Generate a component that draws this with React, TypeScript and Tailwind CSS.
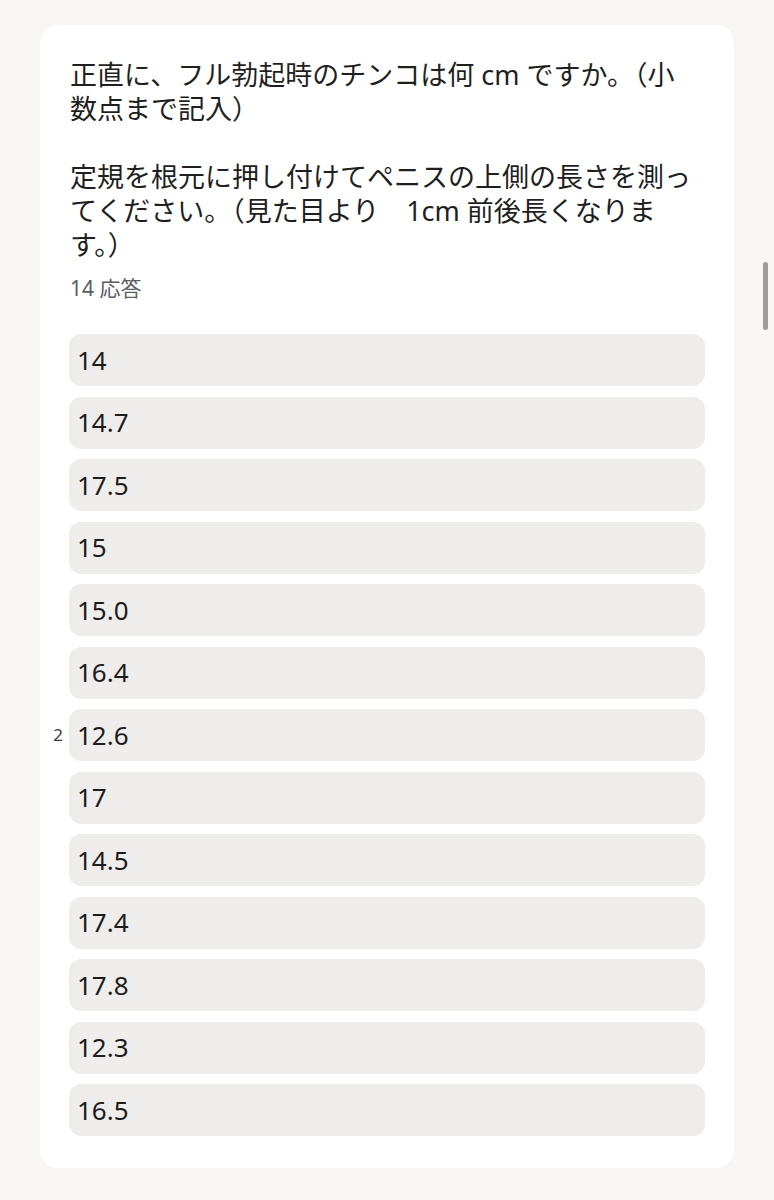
import React from "react";

const question =
  "正直に、フル勃起時のチンコは何 cm ですか。（小\n数点まで記入）\n\n定規を根元に押し付けてペニスの上側の長さを測っ\nてください。（見た目より　1cm 前後長くなりま\nす。）";

type Answer = { value: string; count?: number };

const answers: Answer[] = [
  { value: "14" },
  { value: "14.7" },
  { value: "17.5" },
  { value: "15" },
  { value: "15.0" },
  { value: "16.4" },
  { value: "12.6", count: 2 },
  { value: "17" },
  { value: "14.5" },
  { value: "17.4" },
  { value: "17.8" },
  { value: "12.3" },
  { value: "16.5" },
];

function AnswerRow({ answer }: { answer: Answer }) {
  return (
    <div className="relative flex h-[52px] items-center rounded-[12px] bg-[#eeedec] pl-2 text-[26px] text-[#1c1c1c]">
      {answer.count && answer.count > 1 && (
        <span className="absolute right-full mr-[6px] text-[17px] text-[#3c3c3c]">
          {answer.count}
        </span>
      )}
      {answer.value}
    </div>
  );
}

export default function App() {
  return (
    <div
      className="relative min-h-[1200px] bg-[#f7f6f4] px-10 pt-[25px]"
      style={{ fontFamily: '"Noto Sans", "Noto Sans CJK JP", sans-serif' }}
    >
      <section className="rounded-[18px] bg-white px-[29px] pb-8 pt-[33px]">
        <h2 className="whitespace-pre-line pl-px text-[27px] leading-[34px] font-normal text-[#1f1f1f]">
          {question}
        </h2>
        <p className="mt-3 pl-px text-[21px] leading-[28px] text-[#5b5b62]">14 応答</p>

        <div className="mt-8 flex flex-col gap-[10.5px]">
          {answers.map((a, i) => (
            <AnswerRow key={i} answer={a} />
          ))}
        </div>
      </section>

      {/* overlay scrollbar */}
      <div className="absolute right-[6px] top-[262px] h-[68px] w-[5px] rounded-full bg-[#9c9c9c]" />
    </div>
  );
}
